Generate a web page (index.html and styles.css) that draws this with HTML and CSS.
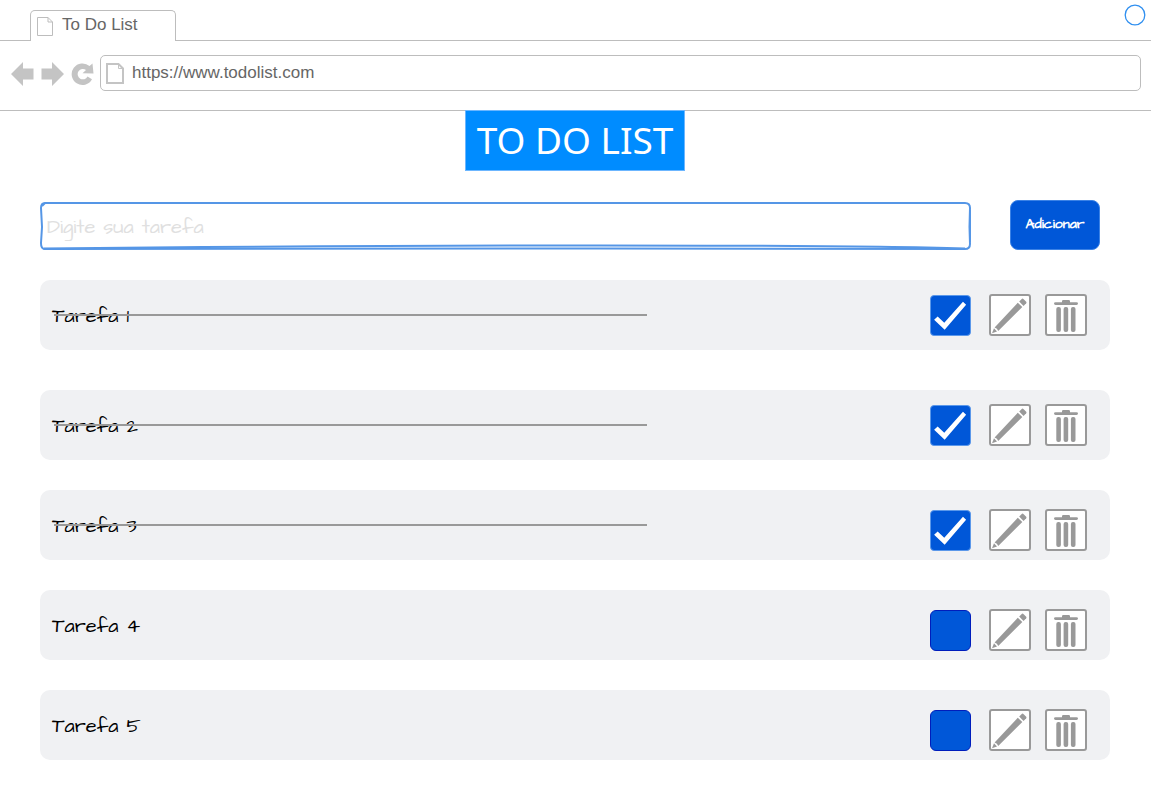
FILE: index.html
```html
<!DOCTYPE html>
<html lang="pt-BR">
<head>
<meta charset="utf-8">
<title>To Do List</title>
<link rel="stylesheet" href="styles.css">
</head>
<body>
<svg class="sprite" aria-hidden="true">
  <symbol id="pencil" viewBox="0 0 42 42">
    <path d="M3 39.200 5 34.200 8 37.400Z"/>
    <path d="M5.600 33.400 28.800 8.700 33.300 13 9.200 37Q8.400 34.200 5.600 33.400Z"/>
    <path d="M30.200 7.600 33 4.800Q33.700 4.300 34.400 4.900L37.200 7.700Q37.800 8.500 37.200 9.200L34.500 11.900Z"/>
  </symbol>
  <symbol id="trash" viewBox="0 0 42 42">
    <path d="M10.500 8.200H17V7.300Q17 6 18.300 6H23.700Q25 6 25 7.300V8.200H31.500Q33 8.200 33 9.600T31.500 11H10.500Q9 11 9 9.600T10.500 8.200Z"/>
    <rect x="11.300" y="13" width="4.600" height="25" rx="2"/>
    <rect x="18.600" y="13" width="4.600" height="25" rx="2"/>
    <rect x="25.900" y="13" width="4.600" height="25" rx="2"/>
  </symbol>
</svg>

<header class="browser">
  <div class="tabs">
    <div class="tab">
      <svg class="tab-icon" viewBox="0 0 16 19"><path d="M.5.5H11L15.500 5V18.500H.5ZM11 .5V5H15.500"/></svg>
      <span>To Do List</span>
    </div>
    <svg class="window-dot" viewBox="0 0 22 22"><circle cx="11" cy="11" r="9.8"/></svg>
  </div>
  <div class="toolbar">
    <button class="nav" type="button" aria-label="Voltar"><svg viewBox="0 0 24 24"><path d="M0 12 12 0V6.500H22.500V17.500H12V24Z"/></svg></button>
    <button class="nav" type="button" aria-label="Avançar"><svg viewBox="0 0 24 24"><path d="M23 12 11 0V6.500H.5V17.500H11V24Z"/></svg></button>
    <button class="nav" type="button" aria-label="Recarregar"><svg viewBox="0 0 24 24"><path d="M16.500 14.500A5.200 5.200 0 1 1 15 8L11.500 11.200 22.500 11.500 21.500 1.500 18.500 4A10.800 10.800 0 1 0 21 17.300Z"/></svg></button>
    <label class="address">
      <svg class="page-icon" viewBox="0 0 18 21"><path d="M1 1H12.500L17 5.500V20H1Z"/><path class="fold" d="M12.500 1V5.500H17"/></svg>
      <input type="text" value="https://www.todolist.com" aria-label="Endereço">
    </label>
  </div>
</header>

<main>
  <h1>TO DO LIST</h1>
  <form class="new-task">
    <div class="field">
      <svg class="sketch" viewBox="0 0 931 48" preserveAspectRatio="none">
        <path d="M5 1H925Q930 1 930 6L929.500 25 930 42Q930 47 925 47L560 46.500 4 47Q1 46 1 41L2 25 1 6Q1 1 5 1"/>
        <path d="M2 4 5 1M4 46.500Q300 43.500 560 43.500T925 46.500M930 8V40"/>
      </svg>
      <input type="text" placeholder="Digite sua tarefa" aria-label="Nova tarefa">
    </div>
    <button class="add" type="button">Adicionar</button>
  </form>

  <ul class="tasks">
    <li class="task task-first">
      <label class="name done" for="t1">Tarefa 1</label>
      <div class="actions">
        <input type="checkbox" id="t1" checked>
        <button class="edit" type="button" aria-label="Editar"><svg><use href="#pencil"/></svg></button>
        <button class="delete" type="button" aria-label="Excluir"><svg><use href="#trash"/></svg></button>
      </div>
    </li>
    <li class="task">
      <label class="name done" for="t2">Tarefa 2</label>
      <div class="actions">
        <input type="checkbox" id="t2" checked>
        <button class="edit" type="button" aria-label="Editar"><svg><use href="#pencil"/></svg></button>
        <button class="delete" type="button" aria-label="Excluir"><svg><use href="#trash"/></svg></button>
      </div>
    </li>
    <li class="task">
      <label class="name done" for="t3">Tarefa 3</label>
      <div class="actions lowered">
        <input type="checkbox" id="t3" checked>
        <button class="edit" type="button" aria-label="Editar"><svg><use href="#pencil"/></svg></button>
        <button class="delete" type="button" aria-label="Excluir"><svg><use href="#trash"/></svg></button>
      </div>
    </li>
    <li class="task">
      <label class="name" for="t4">Tarefa 4</label>
      <div class="actions lowered">
        <input type="checkbox" id="t4">
        <button class="edit" type="button" aria-label="Editar"><svg><use href="#pencil"/></svg></button>
        <button class="delete" type="button" aria-label="Excluir"><svg><use href="#trash"/></svg></button>
      </div>
    </li>
    <li class="task">
      <label class="name" for="t5">Tarefa 5</label>
      <div class="actions lowered">
        <input type="checkbox" id="t5">
        <button class="edit" type="button" aria-label="Editar"><svg><use href="#pencil"/></svg></button>
        <button class="delete" type="button" aria-label="Excluir"><svg><use href="#trash"/></svg></button>
      </div>
    </li>
  </ul>
</main>
</body>
</html>
```

FILE: styles.css
```css
:root {
  --line: #bdbdbd;
  --grey: #999;
  --blue: #0057d8;
  --hand: "Architects Daughter", "DejaVu Sans", sans-serif;
}

* { box-sizing: border-box; }

body {
  margin: 0;
  background: #fff;
  font-family: "Liberation Sans", Arial, sans-serif;
}

button, input {
  margin: 0;
  padding: 0;
  font: inherit;
}

svg { display: block; }
.sprite { display: none; }

/* Browser frame */
.browser {
  color: #666;
  font-size: 17px;
  border-bottom: 1px solid var(--line);
}

.tabs {
  display: flex;
  justify-content: space-between;
  padding: 4px 5px 0 30px;
  border-bottom: 1px solid var(--line);
}

.tab {
  display: flex;
  align-items: center;
  gap: 9px;
  width: 146px;
  height: 31px;
  margin: 6px 0 -1px;
  padding: 0 6px 2px;
  background: #fff;
  border: 1px solid var(--line);
  border-bottom: 0;
  border-radius: 5px 5px 0 0;
}

.tab-icon {
  width: 16px;
  height: 19px;
  margin-top: 3px;
  fill: none;
  stroke: var(--line);
}

.window-dot {
  width: 22px;
  height: 22px;
  fill: #fff;
  stroke: #2f8ff0;
  stroke-width: 1.3;
}

.toolbar {
  display: flex;
  align-items: center;
  gap: 6px;
  padding: 14px 10px 19px;
}

.nav {
  width: 24px;
  height: 24px;
  border: 0;
  background: none;
}

.nav svg {
  width: 24px;
  height: 24px;
  margin: 1px 0 0 1px;
  fill: #c4c4c4;
}

.address {
  flex: 1;
  display: flex;
  align-items: center;
  gap: 8px;
  height: 36px;
  padding: 0 5px;
  border: 1px solid var(--line);
  border-radius: 5px;
}

.page-icon {
  width: 18px;
  height: 21px;
  fill: none;
  stroke: #c4c4c4;
  stroke-width: 2;
}

.fold { stroke-width: 1; }

.address input {
  flex: 1;
  min-width: 0;
  height: 32px;
  border: 0;
  outline: 0;
  background: none;
  color: #666;
}

/* Page */
main { padding: 0 41px 50px 40px; }

h1 {
  width: fit-content;
  margin: -1px auto 29px;
  padding: 0 11px 2px;
  border: 1px solid #6cb6ff;
  background: #008cff;
  color: #fff;
  font: 400 37px/57px "Noto Sans", sans-serif;
}

.new-task {
  display: flex;
  align-items: center;
  gap: 39px;
  margin-bottom: 30px;
  padding-right: 10px;
}

.field {
  flex: 1;
  position: relative;
  padding-top: 2px;
}

.sketch {
  position: absolute;
  inset: 2px 0 0;
  width: 100%;
  height: 48px;
  overflow: visible;
  fill: none;
  stroke: #5596e6;
  stroke-width: 2;
  pointer-events: none;
}

.field input {
  display: block;
  width: 100%;
  height: 48px;
  padding: 2px 7px 0;
  border: 0;
  outline: 0;
  background: none;
  font: 400 20px var(--hand);
}

.field input::placeholder {
  color: #e0e0e0;
  opacity: 1;
}

.add {
  width: 90px;
  height: 50px;
  padding-bottom: 2px;
  border: 1px solid #3b82e6;
  border-radius: 8px;
  background: var(--blue);
  color: #fff;
  font: 700 14px var(--hand);
}

.tasks {
  display: flex;
  flex-direction: column;
  gap: 30px;
  margin: 0;
  padding: 0;
  list-style: none;
}

.task {
  display: flex;
  align-items: center;
  height: 70px;
  padding: 0 23px 0 12px;
  border-radius: 10px;
  background: #f0f1f3;
}

.task-first { margin-bottom: 10px; }

.name {
  flex: 1;
  position: relative;
  padding-top: 2px;
  color: #000;
  font: 400 20px/24px var(--hand);
}

.done::after {
  content: "";
  position: absolute;
  top: 50%;
  left: 2px;
  width: 67.5%;
  height: 2px;
  margin-top: -1px;
  background: var(--grey);
}

.actions {
  display: flex;
  align-items: center;
}

.lowered { padding-top: 10px; }

.actions input {
  appearance: none;
  width: 41px;
  height: 41px;
  border: 1px solid #001dbc;
  border-radius: 6px;
  background: var(--blue);
}

.actions input:checked {
  border-color: #5b98ea;
  border-radius: 4px;
}

.actions input:checked::before {
  content: "";
  display: block;
  height: 100%;
  background: #fff;
  clip-path: polygon(8% 62%, 17% 54%, 34% 70%, 82% 16%, 90% 24%, 35% 88%);
}

.edit, .delete {
  width: 42px;
  height: 42px;
  border: 2px solid var(--grey);
  border-radius: 3px;
  background: #fff;
}

.edit { margin: 0 14px 0 18px; }

.edit svg, .delete svg {
  width: 42px;
  height: 42px;
  margin: -2px;
  fill: var(--grey);
}
```
